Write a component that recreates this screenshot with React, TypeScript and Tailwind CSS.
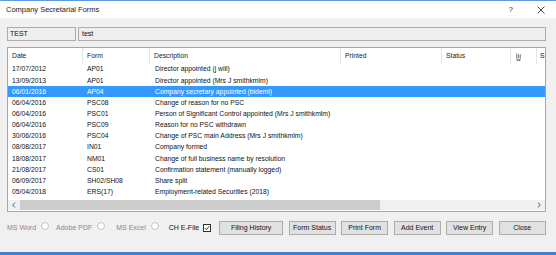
import React from 'react';

const rows = [
  { date: '17/07/2012', form: 'AP01', desc: 'Director appointed (j will)' },
  { date: '13/09/2013', form: 'AP01', desc: 'Director appointed (Mrs J smithkmlm)' },
  { date: '06/01/2016', form: 'AP04', desc: 'Company secretary appointed (bidemi)', selected: true },
  { date: '06/04/2016', form: 'PSC08', desc: 'Change of reason for no PSC' },
  { date: '06/04/2016', form: 'PSC01', desc: 'Person of Significant Control appointed (Mrs J smithkmlm)' },
  { date: '06/04/2016', form: 'PSC09', desc: 'Reason for no PSC withdrawn' },
  { date: '30/06/2016', form: 'PSC04', desc: 'Change of PSC main Address (Mrs J smithkmlm)' },
  { date: '08/08/2017', form: 'IN01', desc: 'Company formed' },
  { date: '18/08/2017', form: 'NM01', desc: 'Change of full business name by resolution' },
  { date: '21/08/2017', form: 'CS01', desc: 'Confirmation statement (manually logged)' },
  { date: '06/09/2017', form: 'SH02/SH08', desc: 'Share split' },
  { date: '05/04/2018', form: 'ERS(17)', desc: 'Employment-related Securities (2018)' },
];

const cols = 'grid grid-cols-[75px_67px_191px_101px_69px_26px_1fr]';

const Radio = () => (
  <span className="inline-block w-[8px] h-[8px] rounded-full border border-[#c4c4c4] bg-white" />
);

const Btn = ({ label, w = 'w-[47px]' }: { label: string; w?: string }) => (
  <div
    className={`${w} h-[14px] flex items-center justify-center border border-[#adadad] bg-[#e1e1e1] text-[7px] text-[#111]`}
  >
    {label}
  </div>
);

export default function App() {
  return (
    <div
      className="w-[556px] h-[255px] bg-[#f0f0f0] border-t border-[#5b9be0] flex flex-col overflow-hidden"
      style={{ fontFamily: '"Liberation Sans", Arial, sans-serif' }}
    >
      {/* Title bar */}
      <div className="h-[17px] bg-white flex items-center pl-[6px] pr-[11px]">
        <span className="text-[7.5px] text-[#222] flex-1">Company Secretarial Forms</span>
        <span className="text-[8px] text-[#333] mr-[24px]">?</span>
        <svg width="8" height="8" viewBox="0 0 8 8">
          <path d="M0.5 0.5 L7.5 7.5 M7.5 0.5 L0.5 7.5" stroke="#333" strokeWidth="0.9" />
        </svg>
      </div>

      <div className="flex flex-col px-[7px] pt-[9px] pr-[10px]">
        {/* Fields */}
        <div className="flex gap-[2px] h-[14px]">
          <div className="w-[69px] border border-[#acacac] bg-[#eeeeee] text-[7px] text-[#111] pl-[2px] flex items-center">
            TEST
          </div>
          <div className="flex-1 border border-[#acacac] bg-[#eeeeee] text-[7px] text-[#111] pl-[3px] flex items-center">
            test
          </div>
        </div>

        {/* List view */}
        <div className="mt-[6px] h-[165px] border border-[#a5a5a5] bg-white flex flex-col text-[6.8px] text-[#111]">
          <div className={`${cols} h-[16px] shrink-0`}>
            {['Date', 'Form', 'Description', 'Printed', 'Status'].map((h) => (
              <div key={h} className="flex items-center pl-[4px] border-r border-[#e5e5e5] text-[#222]">
                {h}
              </div>
            ))}
            <div className="flex items-center pl-[5px] border-r border-[#e5e5e5]">
              <svg width="5" height="9" viewBox="0 0 5 9">
                <path d="M0.8 1.5 V6.5 A1.7 1.7 0 0 0 4.2 6.5 V2.2" fill="none" stroke="#333" strokeWidth="0.7" />
                <path d="M2.5 2.5 V6.2" stroke="#333" strokeWidth="0.6" />
                <path d="M0.5 8.6 H4.5" stroke="#333" strokeWidth="0.5" />
              </svg>
            </div>
            <div className="flex items-center pl-[3px]">S</div>
          </div>

          <div className="flex-1 overflow-hidden">
            {rows.map((r, i) => (
              <div
                key={i}
                className={`${cols} h-[11.15px] items-center whitespace-nowrap ${
                  r.selected ? 'bg-[#3399ff] text-white' : ''
                }`}
              >
                <div className="pl-[4px]">{r.date}</div>
                <div className="pl-[4px]">{r.form}</div>
                <div className="pl-[5px] col-span-5">{r.desc}</div>
              </div>
            ))}
          </div>

          {/* Horizontal scrollbar */}
          <div className="h-[10px] shrink-0 bg-[#f0f0f0] flex items-center mb-[1px]">
            <div className="w-[12px] flex items-center justify-center">
              <svg width="4" height="6" viewBox="0 0 4 6">
                <path d="M3 0.5 L0.8 3 L3 5.5" fill="none" stroke="#606060" strokeWidth="1" />
              </svg>
            </div>
            <div className="w-[360px] h-full bg-[#cdcdcd]" />
            <div className="flex-1" />
            <div className="w-[12px] flex items-center justify-center">
              <svg width="4" height="6" viewBox="0 0 4 6">
                <path d="M1 0.5 L3.2 3 L1 5.5" fill="none" stroke="#606060" strokeWidth="1" />
              </svg>
            </div>
          </div>
        </div>

        {/* Bottom controls */}
        <div className="mt-[9px] h-[14px] flex items-center text-[7px]">
          <span className="text-[#8a8a8a]">MS Word</span>
          <span className="ml-[5px]"><Radio /></span>
          <span className="ml-[7px] text-[#8a8a8a]">Adobe PDF</span>
          <span className="ml-[5px]"><Radio /></span>
          <span className="ml-[11px] text-[#8a8a8a]">MS Excel</span>
          <span className="ml-[5px]"><Radio /></span>
          <span className="ml-[10px] text-[#111]">CH E-File</span>
          <span className="ml-[4px] w-[8px] h-[8px] border border-[#333] bg-white flex items-center justify-center">
            <svg width="6" height="6" viewBox="0 0 6 6">
              <path d="M0.8 3 L2.4 4.6 L5.3 1.2" fill="none" stroke="#222" strokeWidth="0.9" />
            </svg>
          </span>
          <div className="ml-[8px] flex gap-[5.5px]">
            <Btn label="Filing History" w="w-[64px]" />
            <Btn label="Form Status" />
            <Btn label="Print Form" />
            <Btn label="Add Event" />
            <Btn label="View Entry" />
            <Btn label="Close" />
          </div>
        </div>
      </div>

      <div className="flex-1" />
      <div className="h-[3px] bg-[#3b83d6]" />
    </div>
  );
}
